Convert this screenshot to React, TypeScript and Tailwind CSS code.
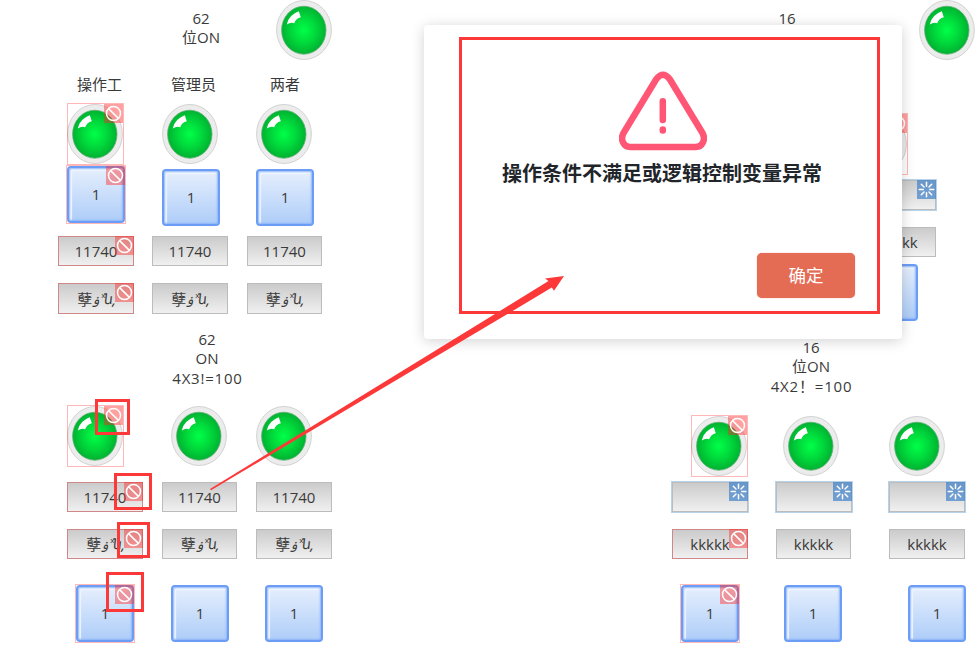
import { useId, type ReactNode } from "react";

type Mark = "ban" | "load";

function BanIcon() {
  return (
    <svg viewBox="0 0 19 19" className="block size-[19px]" fill="none" stroke="#fff" strokeWidth="1.5">
      <circle cx="9.5" cy="9.5" r="7" />
      <path d="M4.6 4.6 14.4 14.4" />
    </svg>
  );
}

function LoadIcon() {
  return (
    <svg viewBox="0 0 19 19" className="block size-[19px]" fill="none" stroke="#fff" strokeWidth="1.5" strokeLinecap="round">
      <path d="M9.5 2.2v4M9.5 12.8v4M2.2 9.5h4M12.8 9.5h4M4.3 4.3l2.7 2.7M12 12l2.7 2.7M4.3 14.7 7 12M12 7l2.7-2.7" />
    </svg>
  );
}

function Overlay({ mark, frame = "-inset-px" }: { mark?: Mark; frame?: string }) {
  if (!mark) return null;
  const ban = mark === "ban";
  return (
    <>
      <span className={`absolute border ${frame} ${ban ? "border-[#ff000048]" : "border-[#2f7fc358]"}`} />
      <span className={`absolute top-0 right-0 ${ban ? "bg-[#ff2a2a70]" : "bg-[#3b7fc8ad]"}`}>
        {ban ? <BanIcon /> : <LoadIcon />}
      </span>
    </>
  );
}

function Lamp({ className = "", mark }: { className?: string; mark?: Mark }) {
  const id = useId();
  return (
    <div className={`relative h-[60px] w-14 shrink-0 ${className}`}>
      <svg viewBox="0 0 56 60" className="block h-[60px] w-14">
        <defs>
          <radialGradient id={id}>
            <stop offset="0" stopColor="#00ff48" />
            <stop offset="0.5" stopColor="#00dc3c" />
            <stop offset="1" stopColor="#00b231" />
          </radialGradient>
        </defs>
        <ellipse cx="28" cy="30" rx="27.4" ry="29.5" fill="#ececec" stroke="#d2d2d2" />
        <ellipse cx="27.8" cy="30.2" rx="22.2" ry="24" fill={`url(#${id})`} stroke="#5fae74" strokeWidth="0.8" />
        <path d="M10.8 24.5Q12.6 15 22.8 11.3L24.8 17.3Q20 18.5 18.2 23.2Q14.5 22 10.8 24.5Z" fill="#fff" />
      </svg>
      <Overlay mark={mark} frame="-inset-y-px left-0 -right-px" />
    </div>
  );
}

function Key({ className = "", mark }: { className?: string; mark?: Mark }) {
  return (
    <div
      className={`relative flex h-[57px] w-[58px] shrink-0 items-center justify-center rounded border-2 border-[#6c9df6] bg-linear-to-b from-[#e6effd] to-[#aecdf8] shadow-[inset_0_0_2px_1px_#8db6f9,inset_2px_2px_1px_1px_#f5f9ff] ${className}`}
    >
      1
      <span className="absolute -inset-0.5">
        <Overlay mark={mark} />
      </span>
    </div>
  );
}

function Field({ className = "w-[76px]", mark, children }: { className?: string; mark?: Mark; children?: ReactNode }) {
  return (
    <div
      className={`relative flex min-h-[30px] shrink-0 items-center justify-center border border-[#bcbcbc] bg-linear-to-b from-[#cbcbcb] to-[#f0f0f0] ${className}`}
    >
      {children}
      <span className="absolute -inset-px">
        <Overlay mark={mark} frame={mark === "ban" ? "inset-0" : "-inset-px"} />
      </span>
    </div>
  );
}

function Garbled() {
  return (
    <span className="ml-px flex h-5 items-center text-[15px] leading-5">
      <span>孽</span>
      <span className="mt-0.5 w-[9px] font-['DejaVu_Sans'] text-[13px] italic">ۏ</span>
      <span className="-mt-2 w-[3px] text-[8px]">x</span>
      <span className="w-2 -skew-x-6 font-['DejaVu_Sans'] text-[14px]">ն</span>
      <span className="italic">,</span>
    </span>
  );
}

function Caption({ className = "", lines, wide }: { className?: string; lines: string[]; wide?: string }) {
  return (
    <div className={`w-[120px] shrink-0 text-center leading-[19px] whitespace-nowrap ${className}`}>
      {lines.map((l) => (
        <div key={l}>{l}</div>
      ))}
      {wide && <div className="mt-px -mr-px tracking-[0.8px]">{wide}</div>}
    </div>
  );
}

function Row({ className = "", children }: { className?: string; children: ReactNode }) {
  return <div className={`flex items-start ${className}`}>{children}</div>;
}

function LeftPanel() {
  return (
    <section className="w-[400px] shrink-0">
      <Row className="h-[75px]">
        <Caption className="mt-[9px] ml-[141px]" lines={["62", "位ON"]} />
        <Lamp className="ml-[15px]" />
      </Row>
      <Row className="h-[29px] leading-[18px]">
        <span className="ml-[77px]">操作工</span>
        <span className="ml-[49px]">管理员</span>
        <span className="ml-[54px]">两者</span>
      </Row>
      <Row className="h-[62px]">
        <Lamp className="ml-[67px]" mark="ban" />
        <Lamp className="ml-[39px]" />
        <Lamp className="ml-[38px]" />
      </Row>
      <Row className="h-[70px]">
        <Key className="ml-[67px]" mark="ban" />
        <Key className="mt-[3px] ml-[37px]" />
        <Key className="mt-[3px] ml-9" />
      </Row>
      <Row className="h-[47px]">
        <Field className="ml-[58px] w-[76px]" mark="ban">11740</Field>
        <Field className="ml-[18px] w-[76px]">11740</Field>
        <Field className="ml-[19px] w-[75px]">11740</Field>
      </Row>
      <Row className="h-[47px]">
        <Field className="ml-[58px] h-[31px] w-[76px]" mark="ban"><Garbled /></Field>
        <Field className="ml-[18px] h-[31px] w-[76px]"><Garbled /></Field>
        <Field className="ml-[19px] h-[31px] w-[75px]"><Garbled /></Field>
      </Row>
      <Row className="h-[76px]">
        <Caption className="ml-[147px]" lines={["62", "ON"]} wide="4X3!=100" />
      </Row>
      <Row className="h-[76px]">
        <Lamp className="ml-[67px]" mark="ban" />
        <Lamp className="ml-12" />
        <Lamp className="ml-[29px]" />
      </Row>
      <Row className="h-[47px]">
        <Field className="ml-[67px] w-[76px]" mark="ban">11740</Field>
        <Field className="ml-[19px] w-[75px]">11740</Field>
        <Field className="ml-[19px] w-[76px]">11740</Field>
      </Row>
      <Row className="h-14">
        <Field className="ml-[67px] w-[76px]" mark="ban"><Garbled /></Field>
        <Field className="ml-[19px] w-[75px]"><Garbled /></Field>
        <Field className="ml-[19px] w-[76px]"><Garbled /></Field>
      </Row>
      <Row>
        <Key className="ml-[76px]" mark="ban" />
        <Key className="ml-[37px]" />
        <Key className="ml-9" />
      </Row>
    </section>
  );
}

function RightPanel() {
  return (
    <section className="w-[317px] shrink-0">
      <Row className="h-[114px]">
        <Caption className="mt-[9px] ml-[67px]" lines={["16"]} />
        <Lamp className="ml-[72px]" />
      </Row>
      <Row className="h-[66px]">
        <Lamp className="ml-[191px]" mark="ban" />
      </Row>
      <Row className="h-[47px]">
        <Field className="ml-[200px] w-[76px]" mark="load" />
      </Row>
      <Row className="h-[37px]">
        <Field className="ml-[200px] w-[76px]">kkkkk</Field>
      </Row>
      <Row className="h-[74px]">
        <Key className="ml-[200px]" />
      </Row>
      <Row className="h-[78px]">
        <Caption className="ml-[91px]" lines={["16", "位ON"]} wide="4X2！=100" />
      </Row>
      <Row className="h-[66px]">
        <Lamp className="ml-[31px]" mark="ban" />
        <Lamp className="ml-9" />
        <Lamp className="ml-[50px]" />
      </Row>
      <Row className="h-[47px]">
        <Field className="ml-3 w-[76px]" mark="load" />
        <Field className="ml-7 w-[76px]" mark="load" />
        <Field className="ml-[37px] w-[76px]" mark="load" />
      </Row>
      <Row className="h-14">
        <Field className="ml-3 w-[76px]" mark="ban">kkkkk</Field>
        <Field className="ml-7 w-[75px]">kkkkk</Field>
        <Field className="ml-[38px] w-[76px]">kkkkk</Field>
      </Row>
      <Row>
        <Key className="ml-[21px]" mark="ban" />
        <Key className="ml-[45px]" />
        <Key className="ml-[66px]" />
      </Row>
    </section>
  );
}

function Dialog() {
  return (
    <div className="absolute top-[25px] left-[424px] flex h-[314px] w-[478px] flex-col items-center rounded bg-white pt-[46px] shadow-[0_2px_14px_rgba(0,0,0,0.18)]">
      <svg viewBox="0 0 88 80" className="h-20 w-[88px]" fill="none" stroke="#ff5675" strokeWidth="6.5" strokeLinecap="round">
        <path d="M37.2 8.2Q44 -0.5 50.8 8.2L83.2 61.5C87.4 68.5 83.2 75.9 77 75.9H11C4.8 75.9 0.6 68.5 4.8 61.5Z" strokeLinejoin="round" />
        <path d="M43.8 30.3v18.8M43.8 58.6v1" />
      </svg>
      <h2 className="mt-2 mr-0.5 text-xl leading-[30px] font-bold whitespace-nowrap text-[#212529]">
        操作条件不满足或逻辑控制变量异常
      </h2>
      <button className="mt-16 mr-[47px] h-[45px] w-[98px] self-end rounded-[5px] bg-[#e46c55] text-[17.5px] text-white shadow-[0_0_1px_#e46c55]">
        确定
      </button>
    </div>
  );
}

function Annotations() {
  return (
    <div className="pointer-events-none">
      <div className="absolute top-[37px] left-[459px] h-[277px] w-[421px] border-3 border-[#fc3838]" />
      <div className="absolute top-[399px] left-[95px] h-9 w-[35px] border-3 border-[#fc3838]" />
      <div className="absolute top-[473px] left-[114px] h-[37px] w-[38px] border-3 border-[#fc3838]" />
      <div className="absolute top-[522px] left-[117px] h-9 w-[33px] border-3 border-[#fc3838]" />
      <div className="absolute top-[572px] left-[106px] h-10 w-[38px] border-3 border-[#fc3838]" />
      <svg className="absolute top-0 left-0 h-[666px] w-[977px]" viewBox="0 0 977 666">
        <path d="M210 489 548.5 281 545 278.5 564 276 554 290.7 551.8 287.6 211 490.2Z" fill="#fc3838" />
      </svg>
    </div>
  );
}

export default function App() {
  return (
    <main className="relative h-[666px] w-[977px] overflow-hidden bg-white font-['Open_Sans','Noto_Sans_CJK_SC',sans-serif] text-[15px] text-[#3a3a3a]">
      <div className="flex justify-between">
        <LeftPanel />
        <RightPanel />
      </div>
      <Dialog />
      <Annotations />
    </main>
  );
}
